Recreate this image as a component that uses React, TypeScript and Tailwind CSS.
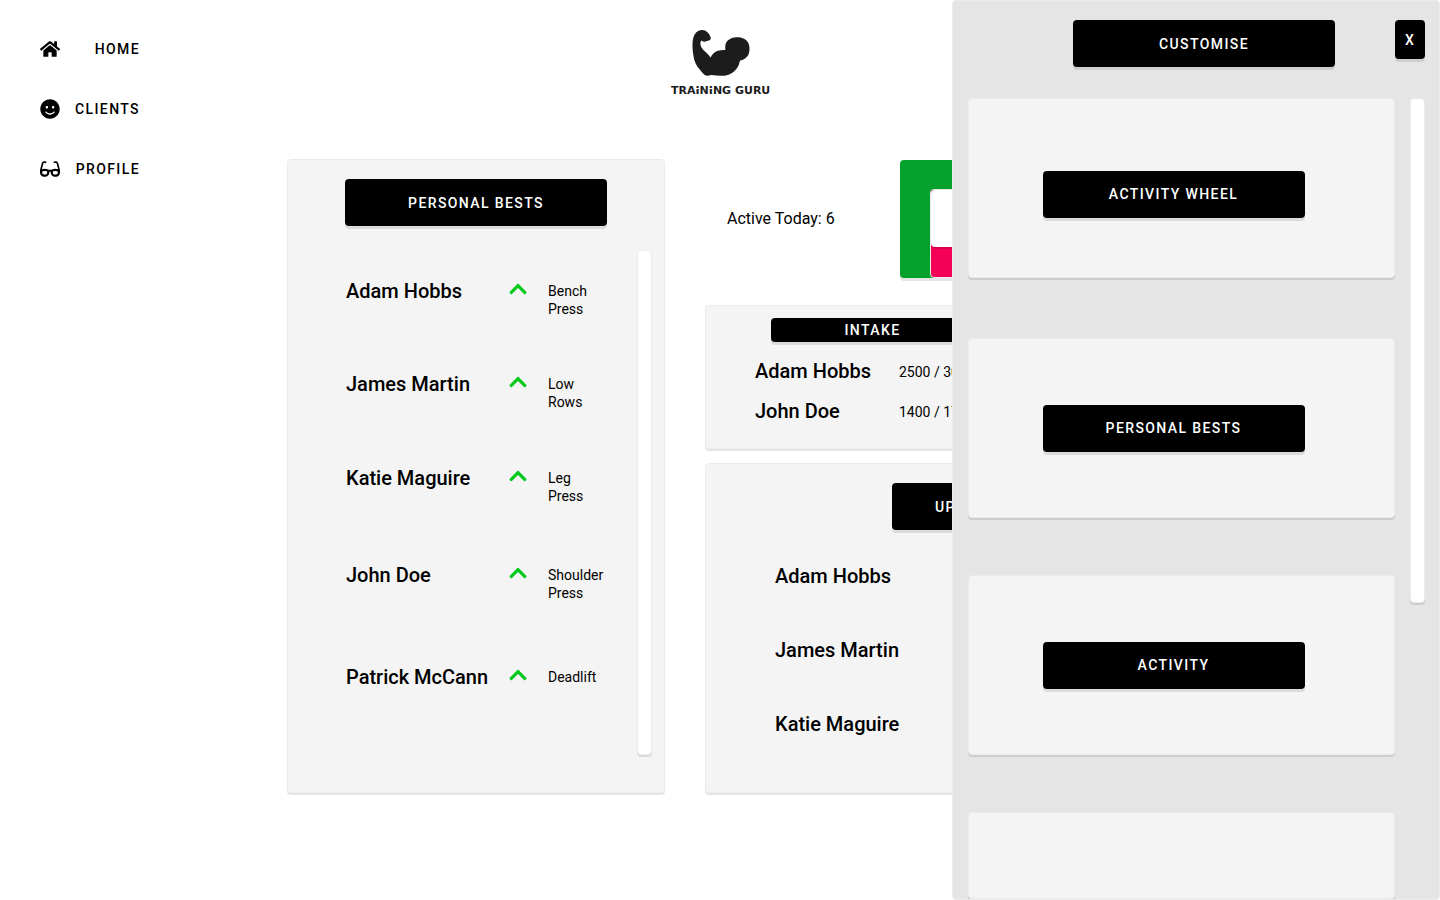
import type { ReactNode } from "react";
import { FaChevronUp, FaGlasses, FaHome, FaSmile } from "react-icons/fa";

const navItems = [
  { label: "Home", icon: FaHome },
  { label: "Clients", icon: FaSmile },
  { label: "Profile", icon: FaGlasses },
];

const personalBests = [
  { name: "Adam Hobbs", exercise: "Bench Press" },
  { name: "James Martin", exercise: "Low Rows" },
  { name: "Katie Maguire", exercise: "Leg Press" },
  { name: "John Doe", exercise: "Shoulder Press" },
  { name: "Patrick McCann", exercise: "Deadlift" },
];

const intake = [
  { name: "Adam Hobbs", amount: "2500 / 3000" },
  { name: "John Doe", amount: "1400 / 1700" },
];

const upcoming = ["Adam Hobbs", "James Martin", "Katie Maguire"];

const widgets = ["Activity Wheel", "Personal Bests", "Activity"];

const cardStyle =
  "rounded border border-[#e9ebed] bg-[#f4f4f4] shadow-[0_2px_0_rgba(0,0,0,0.1)]";

function BlackButton({ children, className = "h-[47px] w-[262px]" }: { children: ReactNode; className?: string }) {
  return (
    <button
      type="button"
      className={`shrink-0 rounded bg-black text-sm font-medium tracking-widest text-white uppercase shadow-[0_3px_0_rgba(0,0,0,0.1)] ${className}`}
    >
      {children}
    </button>
  );
}

function ScrollTrack() {
  return (
    <div className="h-[505px] w-[15px] shrink-0 rounded border border-[#e9ebed] bg-white shadow-[0_2px_0_rgba(0,0,0,0.1)]" />
  );
}

function Logo() {
  return (
    <div className="flex flex-col items-center">
      <svg viewBox="12 11 175 140" className="h-[46px] w-[58px]" aria-hidden="true">
        <path
          fill="#1c1c1c"
          d="M39 11C28 13 19 21 16 32C12 44 12 62 14 78C16 96 19 111 29 124C36 132 43 142 51 149C57 152 64 149 70 148C84 150 97 151 110 150C130 148 146 134 153 119C155 114 156 108 158 104C170 101 178 95 183 86C188 75 187 59 182 49C174 36 160 32 145 33C130 34 119 41 114 52C112 59 112 66 113 72C98 71 85 74 77 82C73 86 70 90 68 95C63 88 57 82 50 76C43 69 38 62 37 55C36 50 37 45 41 43C46 48 53 47 59 44C66 43 70 39 68 33C65 24 56 10 39 11Z"
        />
      </svg>
      <svg viewBox="0 0 104 16" className="mt-1 h-4 w-[104px]" role="img" aria-label="Training Guru">
        <text x="2" y="14" fontFamily="DejaVu Sans" fontWeight="700" fontSize="11" fill="#1c1c1c">
          TRAINING GURU
        </text>
        <path d="M26 8.500h4.500M39.500 8.500h4" stroke="#fff" strokeWidth="1" />
      </svg>
    </div>
  );
}

export default function App() {
  return (
    <div className="relative flex min-h-screen overflow-hidden bg-white font-['Roboto',sans-serif] text-black antialiased">
      <nav className="w-[180px] shrink-0 pt-[29px] pr-10 pl-10">
        <ul className="flex flex-col gap-5">
          {navItems.map(({ label, icon: Icon }) => (
            <li key={label}>
              <a href="#" className="flex h-10 items-center justify-between text-sm font-medium tracking-widest uppercase">
                <Icon className="size-5" />
                {label}
              </a>
            </li>
          ))}
        </ul>
      </nav>

      <main className="min-w-0 flex-1 pr-[100px]">
        <header className="flex h-[159px] justify-center pt-[30px] pr-[78px]">
          <Logo />
        </header>

        <div className="flex gap-10 pl-[107px]">
          <section className={`flex h-[634px] w-[378px] shrink-0 flex-col items-center pt-[19px] ${cardStyle}`}>
            <BlackButton>Personal Bests</BlackButton>
            <div className="mt-6 flex w-full justify-between pr-3 pl-[58px]">
              <ul className="grid grid-rows-[93px_94px_97px_102px_60px] pt-[27px]">
                {personalBests.map(({ name, exercise }) => (
                  <li key={name} className="grid grid-cols-[162px_40px_60px] items-start">
                    <span className="text-xl leading-7 font-medium whitespace-nowrap">{name}</span>
                    <FaChevronUp className="mt-[2px] size-5 text-[#00c91b]" />
                    <span className="pt-[5px] text-sm leading-[18px]">{exercise}</span>
                  </li>
                ))}
              </ul>
              <ScrollTrack />
            </div>
          </section>

          <div className="flex h-[634px] min-w-0 flex-1 flex-col">
            <section className="flex h-[120px] items-center pl-[22px]">
              <p className="w-[173px]">Active Today: 6</p>
              <div className="flex h-[118px] w-[120px] flex-col items-center justify-end rounded bg-[#04a22d] shadow-[0_3px_0_rgba(0,0,0,0.1)]">
                <div className="flex h-[89px] w-[60px] flex-col rounded border border-[#e9ebed] bg-[#f50057]">
                  <div className="h-[57px] rounded bg-white shadow-[0_2px_0_rgba(0,0,0,0.1)]" />
                </div>
              </div>
            </section>

            <section className={`mt-[26px] h-[144px] w-[335px] shrink-0 pt-3 ${cardStyle}`}>
              <div className="flex justify-center">
                <BlackButton className="h-6 w-[204px]">Intake</BlackButton>
              </div>
              <ul className="mt-[9px] pl-[49px]">
                {intake.map(({ name, amount }) => (
                  <li key={name} className="flex h-10 items-center">
                    <span className="w-36 text-xl font-medium">{name}</span>
                    <span className="pt-px text-sm">{amount}</span>
                  </li>
                ))}
              </ul>
            </section>

            <section className={`mt-[14px] flex flex-1 flex-col items-center pt-[19px] ${cardStyle}`}>
              <BlackButton>Upcoming Workouts</BlackButton>
              <ul className="mt-[9px] w-full pl-[69px]">
                {upcoming.map((name) => (
                  <li key={name} className="flex h-[74px] items-center text-xl font-medium">
                    {name}
                  </li>
                ))}
              </ul>
            </section>
          </div>
        </div>
      </main>

      <aside className="absolute inset-y-0 right-0 flex w-[488px] flex-col overflow-hidden rounded border border-[#e9ebed] bg-[#e5e5e5] pt-[19px] pr-[14px] pl-[15px]">
        <div className="flex h-[78px] shrink-0 items-start justify-between pl-[105px]">
          <BlackButton>Customise</BlackButton>
          <BlackButton className="h-[39px] w-[30px]">X</BlackButton>
        </div>
        <div className="flex items-start justify-between">
          <ul className="grid w-[427px] grid-rows-[183px_180px_180px_87px] gap-[57px]">
            {widgets.map((label) => (
              <li key={label} className={`flex h-[180px] items-center justify-center pr-4 first:pt-3 ${cardStyle}`}>
                <BlackButton>{label}</BlackButton>
              </li>
            ))}
            <li className={cardStyle} />
          </ul>
          <ScrollTrack />
        </div>
      </aside>
    </div>
  );
}
